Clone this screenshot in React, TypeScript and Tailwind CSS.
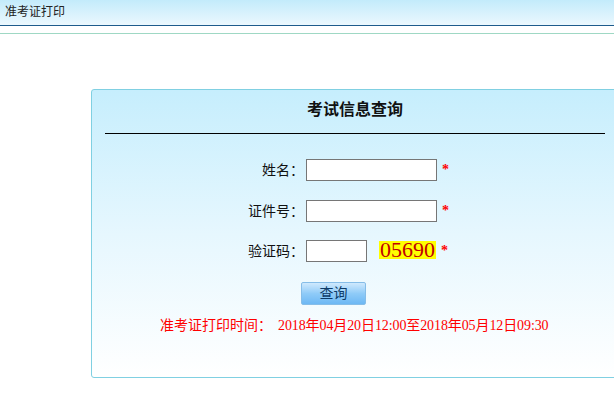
import React from "react";

const cjk = { fontFamily: '"Liberation Serif", "Noto Sans CJK SC", serif' };

function Star() {
  return <span className="ml-[5px] text-[14px] font-bold leading-none text-[#ff0000]" style={cjk}>*</span>;
}

export default function App() {
  return (
    <div className="w-[614px] h-[404px] overflow-hidden bg-white" style={cjk}>
      <div className="h-[26px] border-b border-[#1d5b8c] bg-gradient-to-b from-[#c3ebfb] to-[#ebf8fe] pl-[5px] text-[12px] leading-[25px] text-[#222]">
        准考证打印
      </div>
      <div className="mt-[7px] border-t border-[#9fd8c4]"></div>
      <div className="ml-[91px] mt-[55px] w-[528px] h-[289px] rounded-[3px] border border-[#80d0e2] bg-gradient-to-b from-[#c6eefd] via-[#e6f7fe] to-white px-[13px] pt-[10px]">
        <div className="h-[20px] text-center text-[16px] font-bold leading-[20px] text-[#111]">考试信息查询</div>
        <div className="mt-[13px] h-px bg-black"></div>
        <div className="mt-[25px] flex items-center h-[22px]">
          <div className="w-[199px] text-right text-[14px] text-[#111]">姓名：</div>
          <div className="ml-[2px] h-[22px] w-[131px] border border-[#767676] bg-white"></div>
          <Star />
        </div>
        <div className="mt-[19px] flex items-center h-[22px]">
          <div className="w-[199px] text-right text-[14px] text-[#111]">证件号：</div>
          <div className="ml-[2px] h-[22px] w-[131px] border border-[#767676] bg-white"></div>
          <Star />
        </div>
        <div className="mt-[18px] flex items-center h-[22px]">
          <div className="w-[199px] text-right text-[14px] text-[#111]">验证码：</div>
          <div className="ml-[2px] h-[22px] w-[61px] border border-[#767676] bg-white"></div>
          <div className="ml-[12px] -mt-[3px] flex h-[18px] w-[57px] items-center justify-center bg-[#ffff00] text-[22px] leading-[18px] text-[#c00000]" style={{ fontFamily: '"Liberation Serif", serif' }}>05690</div>
          <Star />
        </div>
        <div className="mt-[20px] flex">
          <div className="ml-[196px] flex h-[23px] w-[65px] items-center justify-center rounded-[2px] border border-[#86bde8] bg-gradient-to-b from-[#cfe9fd] via-[#8fcbf8] to-[#6db8f4] text-[14px] text-[#0d3a66]">
            查询
          </div>
        </div>
        <div className="mt-[10px] flex h-[20px] items-center pl-[55px] text-[14px] text-[#ff0000]">
          <span>准考证打印时间：</span>
          <span className="ml-[6px] tracking-[-0.1px]">2018年04月20日12:00至2018年05月12日09:30</span>
        </div>
      </div>
    </div>
  );
}
